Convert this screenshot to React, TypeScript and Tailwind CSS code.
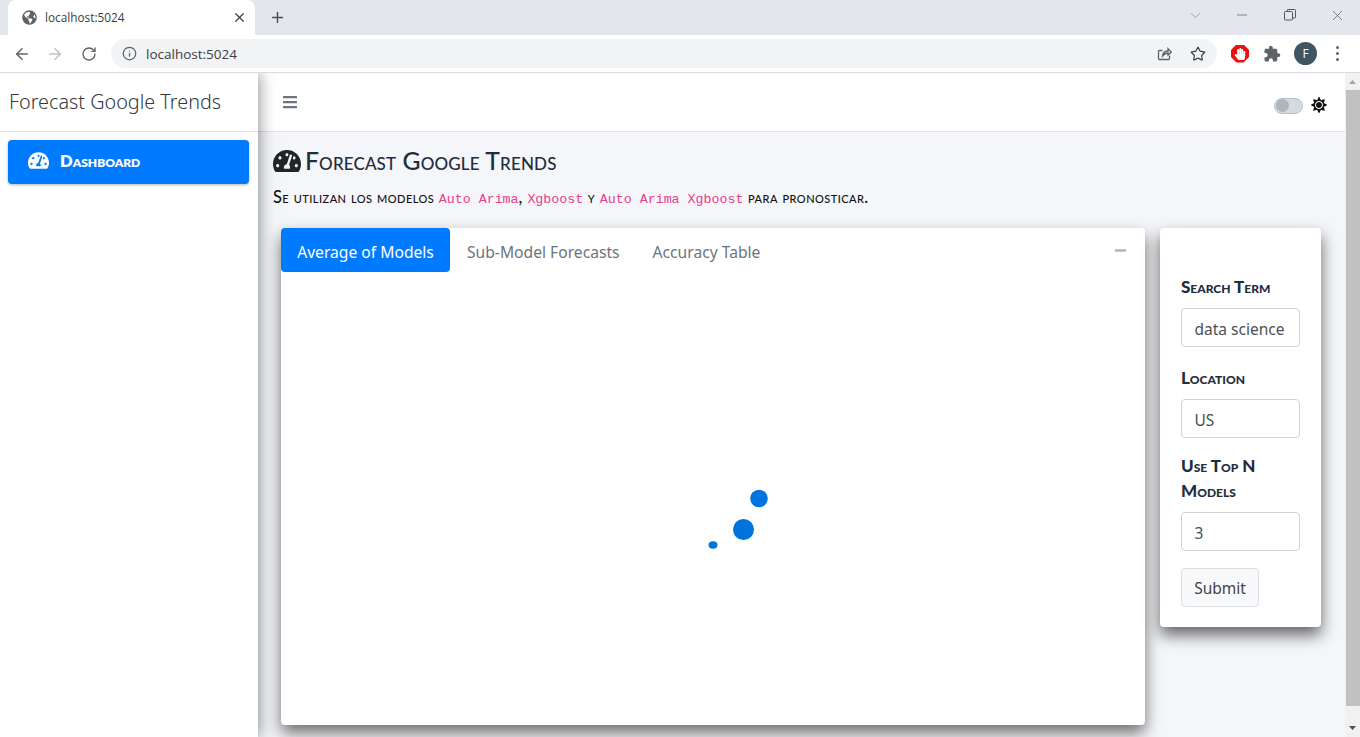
import React from "react";
import { FaTachometerAlt, FaBars, FaSun, FaMinus, FaGlobeAmericas, FaHandPaper } from "react-icons/fa";
import { ArrowLeft, ArrowRight, RotateCw, Info, Star, X, Plus, ChevronDown, Minus } from "lucide-react";

const sc = "font-['Lato',sans-serif] [font-variant-caps:small-caps]";
const body = "font-['Noto_Sans',sans-serif]";
const ui = "font-['Open_Sans','Noto_Sans',sans-serif]";
const code = "font-['Liberation_Mono',monospace] text-[#e83e8c] text-[13.3px] [font-variant-caps:normal] font-normal tracking-normal";

function Field({ label, value, mb }: { label: React.ReactNode; value: string; mb: string }) {
  return (
    <div className={mb}>
      <div className={`${sc} font-black text-[17px] leading-[25px] text-[#1f2d3d] mb-[9px]`}>{label}</div>
      <div className={`${body} h-[39px] w-[119px] border border-[#ced4da] rounded-[4px] pl-[12.5px] pt-[4px] flex items-center text-[15.5px] text-[#495057] bg-white`}>
        {value}
      </div>
    </div>
  );
}

export default function App() {
  return (
    <div className="w-[1360px] h-[737px] overflow-hidden flex flex-col bg-white">
      {/* tab strip */}
      <div className="h-[35px] bg-[#e3e6ea] flex items-end shrink-0">
        <div className="ml-[8px] w-[247px] h-[35px] bg-white rounded-t-[8px] flex items-center pl-[14px] pr-[8px]">
          <FaGlobeAmericas className="text-[#5f6368] text-[15px]" />
          <span className={`${ui} ml-[8px] text-[11.8px] text-[#3c4043] flex-1`}>localhost:5024</span>
          <X size={15} strokeWidth={2} className="text-[#3c4043]" />
        </div>
        <div className="ml-[14px] h-[35px] flex items-center">
          <Plus size={17} strokeWidth={2} className="text-[#4a4e52]" />
        </div>
        <div className="flex-1" />
        <div className="h-[30px] flex items-center self-start pr-[14px]">
          <ChevronDown size={17} strokeWidth={1} className="text-[#80868b]" />
          <Minus size={16} strokeWidth={1} className="ml-[30px] text-[#555]" />
          <svg width="12" height="12" viewBox="0 0 12 12" fill="none" stroke="#555" className="ml-[34px]">
            <rect x="0.5" y="2.5" width="8" height="8.5" rx="1" />
            <path d="M3 2.5V1.5a1 1 0 0 1 1-1h6.5a1 1 0 0 1 1 1V8a1 1 0 0 1-1 1H8.5" />
          </svg>
          <X size={17} strokeWidth={1} className="ml-[33px] text-[#555]" />
        </div>
      </div>
      {/* toolbar */}
      <div className="h-[38px] bg-white border-b border-[#d8dadd] flex items-center shrink-0">
        <ArrowLeft size={18} strokeWidth={2} className="ml-[13px] text-[#5f6368]" />
        <ArrowRight size={18} strokeWidth={2} className="ml-[15px] text-[#bdc1c6]" />
        <RotateCw size={16} strokeWidth={2} className="ml-[17px] text-[#5f6368]" />
        <div className="ml-[14px] w-[1106px] h-[29px] bg-[#f1f3f4] rounded-full flex items-center pl-[11px] pr-[11px]">
          <Info size={15} strokeWidth={2} className="text-[#5f6368]" />
          <span className={`${ui} ml-[9px] mt-[1px] text-[13.500px] text-[#3c4043] flex-1`}>localhost:5024</span>
          <svg width="16" height="16" viewBox="0 0 16 16" fill="none" stroke="#5f6368" strokeWidth="1.3">
            <path d="M13.5 9.5v3a1 1 0 0 1-1 1h-9a1 1 0 0 1-1-1v-7a1 1 0 0 1 1-1h3" />
            <path d="M6.5 10c.3-3 2.5-5 5.5-5V2.7l3.2 3.3L12 9V7c-2.3 0-4 1-5.500 3z" />
          </svg>
          <Star size={16} strokeWidth={1.8} className="ml-[18px] text-[#3c4043]" />
        </div>
        <div className="ml-[14px] w-[18px] h-[18px] bg-[#e8100d] flex items-center justify-center [clip-path:polygon(30%_0,70%_0,100%_30%,100%_70%,70%_100%,30%_100%,0_70%,0_30%)]">
          <FaHandPaper className="text-white text-[12px]" />
        </div>
        <svg width="18" height="18" viewBox="0 0 24 24" fill="#5f6368" className="ml-[14px]">
          <path d="M20.5 11H19V7c0-1.100-.9-2-2-2h-4V3.500C13 2.120 11.880 1 10.500 1S8 2.120 8 3.500V5H4c-1.100 0-1.990.9-1.990 2v3.800H3.500c1.490 0 2.700 1.210 2.700 2.700s-1.210 2.700-2.700 2.700H2V20c0 1.100.9 2 2 2h3.800v-1.500c0-1.490 1.210-2.700 2.700-2.700 1.490 0 2.700 1.210 2.700 2.700V22H17c1.100 0 2-.9 2-2v-4h1.500c1.380 0 2.500-1.120 2.500-2.500S21.880 11 20.500 11z" />
        </svg>
        <div className={`${ui} ml-[13px] w-[23px] h-[23px] rounded-full bg-[#3e5564] text-white text-[12px] flex items-center justify-center`}>F</div>
        <div className="ml-[19px] flex flex-col gap-[3px]">
          <span className="block w-[3px] h-[3px] rounded-full bg-[#5f6368]" />
          <span className="block w-[3px] h-[3px] rounded-full bg-[#5f6368]" />
          <span className="block w-[3px] h-[3px] rounded-full bg-[#5f6368]" />
        </div>
      </div>
      {/* page */}
      <div className="flex-1 min-h-0 flex overflow-hidden">
        <aside className="relative z-10 w-[258px] shrink-0 bg-white shadow-[0_0_16px_rgba(0,0,0,0.5)]">
          <div className="h-[59px] border-b border-[#dee2e6] pl-[9px] pt-[14px]">
            <span className={`${body} font-light text-[19.8px] leading-[30px] text-[#343a40] block`}>Forecast Google Trends</span>
          </div>
          <div className="ml-[8px] mr-[9px] mt-[8px] h-[44px] bg-[#007bff] rounded-[4px] shadow-[0_1px_3px_rgba(0,0,0,0.3)] flex items-center pl-[20px] text-white">
            <FaTachometerAlt className="text-[21px] mb-[3px]" />
            <span className={`${sc} ml-[11px] mb-[2px] font-extrabold text-[16.6px]`}>Dashboard</span>
          </div>
        </aside>
        <main className="flex-1 min-w-0 bg-[#f4f6f9] flex flex-col">
          <div className="h-[59px] shrink-0 bg-white border-b border-[#dee2e6] flex items-center pl-[24px] pr-[18px]">
            <FaBars className="text-[16px] text-[#6c757d] mb-[1px]" />
            <div className="flex-1" />
            <div className="mt-[7px] w-[29px] h-[16px] rounded-full bg-[#d5dade] border border-[#b9c0c6] flex items-center pl-[1px]">
              <span className="block w-[13px] h-[13px] rounded-full bg-[#adb5bd]" />
            </div>
            <FaSun className="mt-[6px] ml-[8px] text-[16px] text-[#111]" />
          </div>
          <div className="pl-[15px] pt-[14px]">
            <div className="flex items-center h-[30px] text-[#1f2d3d]">
              <FaTachometerAlt className="text-[28px] text-[#212529]" />
              <h1 className={`${sc} ml-[4px] text-[24.7px] tracking-[0.14px] font-medium`}>Forecast Google Trends</h1>
            </div>
            <p className={`${sc} mt-[11px] h-[24px] leading-[20px] text-[16.4px] tracking-[0.45px] font-medium text-[#111] whitespace-pre`}>
              Se utilizan los modelos <code className={code}>Auto Arima</code>, <code className={code}>Xgboost</code> y <code className={code}>Auto Arima Xgboost</code> para pronosticar.
            </p>
          </div>
          <div className="flex items-start pl-[23px] pt-[17px]">
            <section className="w-[864px] h-[497px] bg-white rounded-[4px] shadow-[0_8px_16px_rgba(0,0,0,0.55)] flex flex-col">
              <div className={`${body} flex items-center h-[44px] text-[15.65px]`}>
                <div className="h-[44px] w-[169px] rounded-[4px] bg-[#007bff] text-white flex items-center justify-center pt-[5px]">Average of Models</div>
                <div className="ml-[17px] pt-[5px] text-[#6c757d]">Sub-Model Forecasts</div>
                <div className="ml-[33px] pt-[5px] text-[#6c757d]">Accuracy Table</div>
                <div className="flex-1" />
                <FaMinus className="mr-[18px] mt-[1px] text-[13px] text-[#adb5bd]" />
              </div>
              <div className="flex-1 flex items-center justify-center">
                <svg width="140" height="140" viewBox="0 0 140 140">
                  <circle cx="116" cy="69.5" r="8.8" fill="#0073dd" />
                  <circle cx="100.5" cy="100.5" r="10.500" fill="#0073dd" />
                  <ellipse cx="70" cy="116" rx="4.500" ry="3.700" fill="#0073dd" />
                </svg>
              </div>
            </section>
            <section className="ml-[15px] w-[161px] h-[399px] bg-white rounded-[4px] shadow-[0_8px_16px_rgba(0,0,0,0.6)] pl-[21px] pt-[46px]">
              <Field label="Search Term" value="data science" mb="mb-[18px]" />
              <Field label="Location" value="US" mb="mb-[15px]" />
              <Field label={<>Use Top N<br />Models</>} value="3" mb="mb-[17px]" />
              <div className={`${body} w-[78px] h-[39px] rounded-[4px] border border-[#dddfe2] bg-[#f8f9fa] flex items-center justify-center pt-[2px] text-[15.500px] text-[#444]`}>Submit</div>
            </section>
          </div>
        </main>
        <div className="w-[15px] shrink-0 bg-[#f1f1f1] flex flex-col items-center">
          <svg width="15" height="17" viewBox="0 0 15 17" className="shrink-0"><path d="M4 11l3.500-4 3.500 4z" fill="#a3a3a3" /></svg>
          <div className="w-[14px] ml-[1px] h-[616px] bg-[#c1c1c1]" />
          <div className="flex-1" />
          <svg width="15" height="14" viewBox="0 0 15 14" className="shrink-0"><path d="M4 3l3.500 4 3.500-4z" fill="#505050" /></svg>
        </div>
      </div>
    </div>
  );
}
